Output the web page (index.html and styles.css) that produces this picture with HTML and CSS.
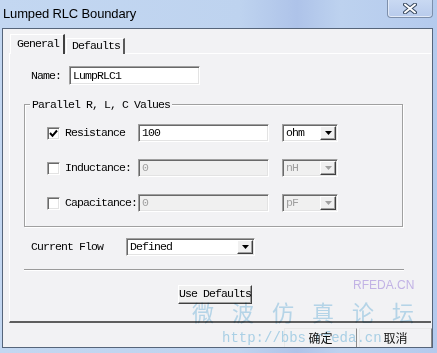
FILE: index.html
```html
<!DOCTYPE html>
<html>
<head>
<meta charset="utf-8">
<link rel="stylesheet" href="styles.css">
</head>
<body>
<div class="window">
  <div class="titlebar">
    <span class="title">Lumped RLC Boundary</span>
    <span class="close">
      <svg width="14" height="11" viewBox="0 0 14 11"><path d="M2 1.5 L12 9.5 M12 1.5 L2 9.5" stroke="#3a4a60" stroke-width="4" stroke-linecap="round"/><path d="M2 1.5 L12 9.5 M12 1.5 L2 9.5" stroke="#ffffff" stroke-width="2" stroke-linecap="round"/></svg>
    </span>
  </div>
  <div class="client">
    <div class="tabs">
      <div class="tab active">General</div>
      <div class="tab">Defaults</div>
    </div>
    <div class="panel">
      <div class="name-row">
        <span class="lbl name-lbl">Name:</span>
        <div class="field name-field">LumpRLC1</div>
      </div>
      <div class="group">
        <div class="legend">Parallel R, L, C Values</div>
        <div class="row">
          <span class="check"><svg width="9" height="9" viewBox="0 0 9 9"><path d="M1 4 L3.5 6.8 L8 1.5" fill="none" stroke="#000" stroke-width="2"/></svg></span>
          <span class="lbl row-lbl">Resistance</span>
          <div class="field val">100</div>
          <div class="combo unit"><span class="combo-text">ohm</span><span class="combo-btn"><svg width="7" height="4" viewBox="0 0 7 4"><path d="M0 0 H7 L3.5 4 Z" fill="#000"/></svg></span></div>
        </div>
        <div class="row">
          <span class="check"></span>
          <span class="lbl row-lbl">Inductance:</span>
          <div class="field val disabled">0</div>
          <div class="combo unit disabled"><span class="combo-text">nH</span><span class="combo-btn"><svg width="7" height="4" viewBox="0 0 7 4"><path d="M0 0 H7 L3.5 4 Z" fill="#a0a0a0"/></svg></span></div>
        </div>
        <div class="row">
          <span class="check"></span>
          <span class="lbl row-lbl">Capacitance:</span>
          <div class="field val disabled">0</div>
          <div class="combo unit disabled"><span class="combo-text">pF</span><span class="combo-btn"><svg width="7" height="4" viewBox="0 0 7 4"><path d="M0 0 H7 L3.5 4 Z" fill="#a0a0a0"/></svg></span></div>
        </div>
      </div>
      <div class="flow-row">
        <span class="lbl flow-lbl">Current Flow</span>
        <div class="combo flow"><span class="combo-text">Defined</span><span class="combo-btn"><svg width="7" height="4" viewBox="0 0 7 4"><path d="M0 0 H7 L3.5 4 Z" fill="#000"/></svg></span></div>
      </div>
      <div class="sep"></div>
      <div class="btn">Use Defaults</div>
    </div>
    <div class="footer">
      <div class="dlg-btn">确定</div>
      <div class="dlg-btn">取消</div>
    </div>
  </div>
  <div class="wm wm-brand">RFEDA.CN</div>
  <div class="wm wm-cn">微波仿真论坛</div>
  <div class="wm wm-url">http://bbs.rfeda.cn</div>
</div>
</body>
</html>
```
FILE: styles.css
```css
* { box-sizing: border-box; }
html, body { margin: 0; padding: 0; }
body { width: 437px; height: 353px; overflow: hidden; background: #c0d4ee; }

.window {
  position: relative;
  width: 437px;
  height: 353px;
  background: linear-gradient(90deg, #c3d7f1 0%, #bed3ef 55%, #aec3e9 68%, #bdd2ef 78%, #b4caed 100%);
  font-family: "Liberation Mono", monospace;
  font-size: 11.5px;
  letter-spacing: -0.9px;
  color: #000;
}

.titlebar {
  height: 28px;
  display: flex;
  align-items: flex-start;
}
.title {
  font-family: "Liberation Sans", Arial, sans-serif;
  font-size: 13px;
  letter-spacing: -0.15px;
  line-height: 16px;
  padding: 6px 0 0 3px;
  color: #000;
}
.close {
  margin-left: auto;
  margin-right: 4px;
  width: 46px;
  height: 18px;
  border: 1px solid #7d8fab;
  border-top: none;
  border-radius: 0 0 4px 4px;
  background: linear-gradient(180deg, #c9d9f2 0%, #b8cbec 100%);
  box-shadow: inset 0 -1px 0 rgba(255,255,255,0.6), inset 1px 0 0 rgba(255,255,255,0.5);
  display: flex;
  align-items: center;
  justify-content: center;
}

.client {
  margin-left: 2px;
  width: 431px;
  height: 320px;
  border: 1px solid #56657a;
  background: #f2f2f4;
  padding: 5px 0 0 0;
  display: flex;
  flex-direction: column;
}

.tabs {
  display: flex;
  align-items: flex-end;
  gap: 1px;
  margin-left: 7px;
  height: 20px;
  margin-bottom: -1px;
  position: relative;
  z-index: 1;
}
.tab {
  height: 16px;
  line-height: 14px;
  padding-left: 5px;
  width: 59px;
  border-top: 1px solid #ffffff;
  border-left: 1px solid #ffffff;
  border-right: 2px solid #5a5a5a;
  background: #f2f2f4;
}
.tab.active {
  height: 20px;
  width: 55px;
  padding-left: 6px;
  line-height: 18px;
  border-right-color: #404040;
}

.panel {
  margin-left: 6px;
  width: 422px;
  height: 270px;
  border-top: 1px solid #ffffff;
  border-left: 1px solid #ffffff;
  border-bottom: 2px solid #5e5e5e;
  padding-top: 12px;
  display: flex;
  flex-direction: column;
  align-items: flex-start;
}

.lbl { line-height: 18px; white-space: nowrap; }

.field {
  height: 19px;
  background: #ffffff;
  border-top: 1px solid #a0a0a0;
  border-left: 1px solid #a0a0a0;
  border-right: 1px solid #ffffff;
  border-bottom: 1px solid #ffffff;
  box-shadow: inset 1px 1px 0 #696969, inset -1px -1px 0 #e3e3e3;
  padding: 0 3px;
  line-height: 17px;
  white-space: nowrap;
}
.field.disabled { background: #f0f0f0; color: #a0a0a0; }

.name-row { display: flex; margin-left: 21px; }
.name-lbl { width: 38px; line-height: 19px; }
.name-field { width: 131px; }

.group {
  margin: 19px 0 0 14px;
  width: 379px;
  border: 1px solid #a0a0a0;
  box-shadow: inset 1px 1px 0 #ffffff, 1px 1px 0 #ffffff;
  padding: 0 0 14px 22px;
  display: flex;
  flex-direction: column;
  gap: 17px;
}
.legend {
  width: max-content;
  margin: -7px 0 -4px -17px;
  padding: 0 2px;
  line-height: 13px;
  background: #f2f2f4;
}

.row { display: flex; align-items: center; height: 18px; }
.check {
  width: 13px;
  height: 13px;
  flex: none;
  background: #ffffff;
  border-top: 1px solid #a0a0a0;
  border-left: 1px solid #a0a0a0;
  border-right: 1px solid #ffffff;
  border-bottom: 1px solid #ffffff;
  box-shadow: inset 1px 1px 0 #696969, inset -1px -1px 0 #e3e3e3;
  display: flex;
  align-items: center;
  justify-content: center;
}
.row-lbl { width: 73px; margin-left: 5px; }
.val { width: 131px; height: 18px; line-height: 16px; }

.combo {
  display: flex;
  height: 18px;
  background: #ffffff;
  border-top: 1px solid #a0a0a0;
  border-left: 1px solid #a0a0a0;
  border-right: 1px solid #ffffff;
  border-bottom: 1px solid #ffffff;
  box-shadow: inset 1px 1px 0 #696969, inset -1px -1px 0 #e3e3e3;
  padding: 1px 1px 1px 1px;
}
.combo-text { flex: 1; padding-left: 2px; line-height: 14px; }
.combo-btn {
  width: 16px;
  flex: none;
  background: #f0f0f0;
  border-top: 1px solid #ffffff;
  border-left: 1px solid #ffffff;
  border-right: 1px solid #404040;
  border-bottom: 1px solid #404040;
  box-shadow: inset -1px -1px 0 #a0a0a0;
  display: flex;
  align-items: center;
  justify-content: center;
}
.unit { width: 56px; margin-left: 13px; }
.combo.disabled { background: #f0f0f0; color: #a0a0a0; }

.flow-row { display: flex; margin: 11px 0 0 21px; }
.flow-lbl { width: 95px; }
.flow { width: 129px; }

.sep {
  margin: 13px 0 0 14px;
  width: 380px;
  height: 2px;
  border-top: 1px solid #9a9a9a;
  border-bottom: 1px solid #ffffff;
}

.btn {
  margin: 14px 0 0 168px;
  width: 74px;
  height: 19px;
  line-height: 16px;
  text-align: center;
  background: #f0f0f0;
  border-top: 1px solid #ffffff;
  border-left: 1px solid #ffffff;
  border-right: 1px solid #404040;
  border-bottom: 1px solid #404040;
  box-shadow: inset -1px -1px 0 #a0a0a0;
}

.footer {
  flex: 1;
  display: flex;
  justify-content: flex-end;
  align-items: flex-end;
  gap: 2px;
}
.dlg-btn {
  width: 73px;
  height: 19px;
  border-left: 1px solid #e8e8e8;
  border-top: 1px solid #e8e8e8;
  border-right: 1px solid #8a8a8a;
  text-align: center;
  font-family: "Noto Sans CJK SC", "Noto Sans", sans-serif;
  font-size: 12px;
  letter-spacing: 0;
  line-height: 18px;
  color: #111;
}

.wm {
  position: absolute;
  pointer-events: none;
  mix-blend-mode: multiply;
  letter-spacing: 0;
  white-space: nowrap;
}
.wm-brand {
  left: 353px;
  top: 278px;
  font-family: "Liberation Sans", sans-serif;
  font-size: 12px;
  color: #cdbdf0;
}
.wm-cn {
  left: 192px;
  top: 300px;
  font-family: "Noto Sans CJK SC", sans-serif;
  font-size: 22px;
  line-height: 22px;
  letter-spacing: 18px;
  color: #bfe0f2;
}
.wm-url {
  left: 222px;
  top: 331px;
  font-family: "Liberation Mono", monospace;
  font-size: 14px;
  line-height: 15px;
  color: #b3dbf0;
}
```
